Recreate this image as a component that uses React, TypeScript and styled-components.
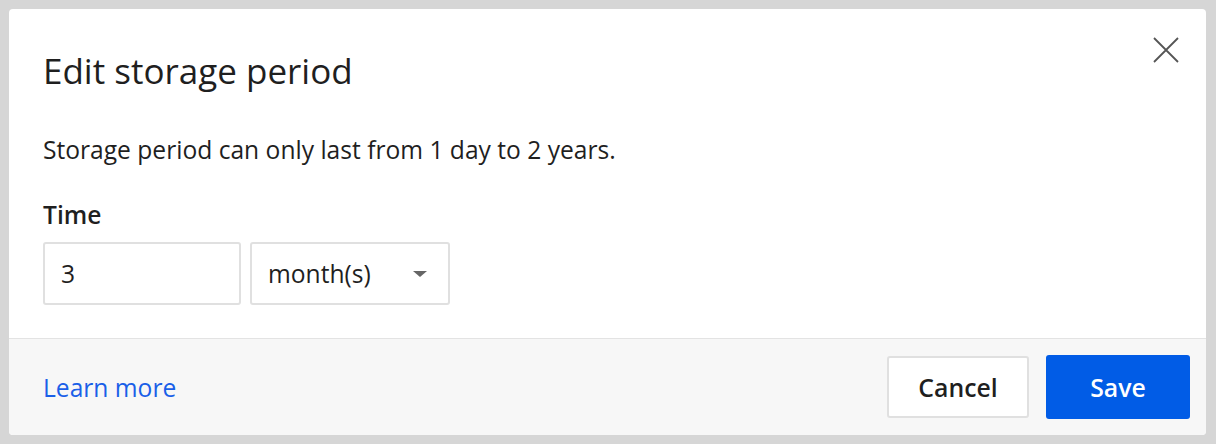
import React from "react";
import styled, { createGlobalStyle } from "styled-components";

const GlobalStyle = createGlobalStyle`
  html, body {
    margin: 0;
    padding: 0;
    background: #d6d6d6;
  }
  body {
    font-family: "Open Sans", "Liberation Sans", sans-serif;
    color: #1f1f1f;
  }
`;

const Page = styled.div`
  width: 1216px;
  height: 444px;
  box-sizing: border-box;
  padding: 9px 10px 9px 9px;
`;

const Dialog = styled.div`
  height: 100%;
  display: flex;
  flex-direction: column;
  background: #ffffff;
  border-radius: 4px;
  overflow: hidden;
`;

const Body = styled.div`
  flex: 1;
  position: relative;
  padding: 40px 34px 0 34px;
`;

const Title = styled.h2`
  margin: 0;
  font-size: 35px;
  font-weight: 400;
  line-height: 44px;
  color: #1f1f1f;
`;

const CloseBtn = styled.button`
  position: absolute;
  top: 28px;
  right: 27px;
  width: 26px;
  height: 26px;
  padding: 0;
  border: none;
  background: transparent;
  cursor: pointer;
  display: flex;
  align-items: center;
  justify-content: center;
`;

const Text = styled.p`
  margin: 41px 0 0 0;
  font-size: 24.6px;
  line-height: 32px;
`;

const Label = styled.div`
  margin-top: 34px;
  font-size: 24.6px;
  font-weight: 600;
  line-height: 30px;
`;

const Row = styled.div`
  display: flex;
  gap: 9px;
  margin-top: 12px;
`;

const Field = styled.div<{ w: number }>`
  width: ${(p) => p.w}px;
  height: 63px;
  box-sizing: border-box;
  border: 2px solid #e0e0e0;
  border-radius: 3px;
  display: flex;
  align-items: center;
  justify-content: space-between;
  padding: 0 21px 0 16px;
  font-size: 24.6px;
`;

const Caret = styled.span`
  width: 0;
  height: 0;
  border-left: 7px solid transparent;
  border-right: 7px solid transparent;
  border-top: 6px solid #666666;
`;

const Footer = styled.div`
  height: 97px;
  box-sizing: border-box;
  border-top: 1px solid #e3e3e3;
  background: #f7f7f7;
  display: flex;
  align-items: center;
  justify-content: space-between;
  padding: 0 16px 0 34px;
`;

const Link = styled.a`
  color: #1a5fe8;
  font-size: 24.6px;
  text-decoration: none;
  cursor: pointer;
`;

const Actions = styled.div`
  display: flex;
  gap: 17px;
  align-items: center;
`;

const Button = styled.button<{ primary?: boolean }>`
  height: ${(p) => (p.primary ? 64 : 62)}px;
  width: ${(p) => (p.primary ? 144 : 142)}px;
  box-sizing: border-box;
  padding: 0;
  border-radius: 3px;
  font-family: "Open Sans", "Liberation Sans", sans-serif;
  font-size: 24.8px;
  font-weight: 600;
  cursor: pointer;
  border: ${(p) => (p.primary ? "none" : "2px solid #e0e0e0")};
  background: ${(p) => (p.primary ? "#015ce6" : "#ffffff")};
  color: ${(p) => (p.primary ? "#ffffff" : "#1f1f1f")};
`;

export default function App() {
  return (
    <>
      <GlobalStyle />
      <Page>
        <Dialog>
          <Body>
            <Title>Edit storage period</Title>
            <CloseBtn aria-label="Close">
              <svg width="26" height="26" viewBox="0 0 26 26">
                <path d="M1 1 L25 25 M25 1 L1 25" stroke="#555" strokeWidth="1.8" fill="none" />
              </svg>
            </CloseBtn>
            <Text>Storage period can only last from 1 day to 2 years.</Text>
            <Label>Time</Label>
            <Row>
              <Field w={198}>3</Field>
              <Field w={200}>
                month(s)
                <Caret />
              </Field>
            </Row>
          </Body>
          <Footer>
            <Link>Learn more</Link>
            <Actions>
              <Button>Cancel</Button>
              <Button primary>Save</Button>
            </Actions>
          </Footer>
        </Dialog>
      </Page>
    </>
  );
}
